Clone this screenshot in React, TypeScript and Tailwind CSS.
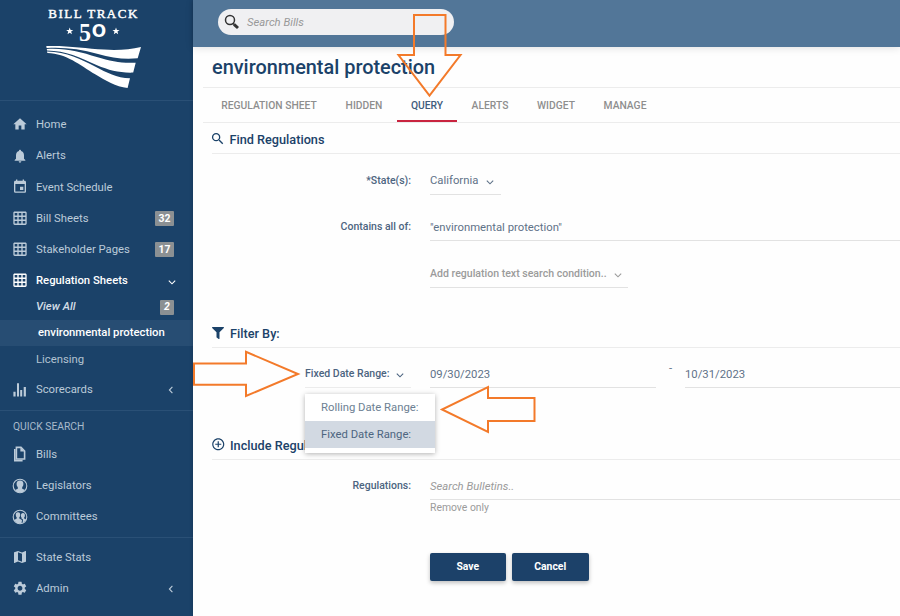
import type { ReactNode } from 'react'
import {
  MdHome,
  MdNotifications,
  MdEvent,
  MdGridOn,
  MdMap,
  MdSettings,
  MdSearch,
  MdAddCircleOutline,
} from 'react-icons/md'
import { FaFilter } from 'react-icons/fa'

type ChevronProps = {
  direction?: 'down' | 'left'
  className?: string
}

const Chevron = ({ direction = 'down', className = '' }: ChevronProps) => (
  <svg
    viewBox="0 0 8 8"
    fill="none"
    stroke="currentColor"
    strokeWidth="1.1"
    className={`h-2 w-2 shrink-0 ${className}`}
  >
    <path d={direction === 'down' ? 'M0.8 2.6 4 5.8 7.2 2.6' : 'M5.4 0.8 2.4 4 5.4 7.2'} />
  </svg>
)

const BarsIcon = () => (
  <svg viewBox="0 0 14 14" fill="currentColor" className="h-3.5 w-3.5">
    <path d="M0.4 8.7h2.2v4.900H0.400zM4 0.300h2v13.300H4zM7.200 7h2v6.600h-2zM10.700 4h2.200v9.600h-2.200z" />
  </svg>
)

const PagesIcon = () => (
  <svg
    viewBox="0 0 14 16"
    fill="none"
    stroke="currentColor"
    strokeWidth="1.6"
    className="h-4 w-3.5"
  >
    <path d="M3.400 1.400h4.600L11.600 5v8H3.400z" />
    <path d="M7.400 1.400v4.200h4.200z" fill="currentColor" stroke="none" />
    <path d="M1.800 3v11.600h7.800" />
  </svg>
)

const LegislatorIcon = () => (
  <svg viewBox="0 0 16 16" className="h-4 w-4">
    <circle cx="8" cy="8" r="6.8" fill="none" stroke="currentColor" strokeWidth="1.1" />
    <path
      fill="currentColor"
      d="M8 2.400c2.500 0 3.600 1.500 3.400 3.600 0 1.500-.6 2.500-1.200 3.100v1.700l2.900 1.200A6.600 6.600 0 0 1 8 14.600a6.600 6.600 0 0 1-5.100-2.600l2.900-1.200V9.100C5.200 8.500 4.600 7.500 4.600 6 4.400 3.900 5.500 2.400 8 2.400z"
    />
  </svg>
)

const CommitteeIcon = () => (
  <svg viewBox="0 0 16 16" className="h-4 w-4">
    <circle cx="8" cy="8" r="6.8" fill="none" stroke="currentColor" strokeWidth="1.1" />
    <path
      fill="currentColor"
      d="M6 3.200c1.700 0 2.300 1.200 2.200 2.700 0 1.200-.5 1.900-.9 2.400v1.200l2.700 1.600-.5 3.300a6.600 6.600 0 0 1-7.200-3.500l2.400-1.300V8.300c-.4-.5-.9-1.200-.9-2.400C3.700 4.400 4.300 3.200 6 3.200z"
    />
    <path
      fill="currentColor"
      d="M11 4.100c1.500 0 2 1 1.900 2.300 0 1-.4 1.600-.8 2v1l1.900.8a6.600 6.600 0 0 1-3.300 3.700l.3-3.400-1.500-1.100v-1c-.4-.4-.6-1-.6-2C8.900 5.100 9.500 4.100 11 4.100z"
    />
  </svg>
)

const Logo = () => (
  <div className="h-[101px] shrink-0 border-b border-[#2a5076] text-white">
    <svg viewBox="0 0 193 100" fill="currentColor" className="h-[100px] w-[193px]">
      <text
        x="48.300"
        y="17.600"
        fontSize="13"
        textLength="89"
        fontFamily="Liberation Serif, serif"
        stroke="currentColor"
        strokeWidth="0.45"
      >
        BILL TRACK
      </text>
      <text
        x="79"
        y="41.300"
        fontSize="25.500"
        fontWeight="bold"
        textLength="12"
        lengthAdjust="spacingAndGlyphs"
        fontFamily="Liberation Serif, serif"
      >
        5
      </text>
      <text x="91.800" y="36.800" fontSize="25" fontWeight="bold" fontFamily="Lato, sans-serif">
        o
      </text>
      <path d="M69.700 27.400l.9 2.500 2.700.1-2.100 1.600.7 2.600-2.200-1.500-2.200 1.500.7-2.600-2.100-1.600 2.700-.1z" />
      <path d="M116 27.400l.9 2.500 2.700.1-2.100 1.600.7 2.600-2.200-1.500-2.200 1.500.7-2.600-2.100-1.600 2.700-.1z" />
      <path d="M46.300 46C66 45.200 86 48.500 104 49.600c14 .8 26 0 37-2.600l-3.300 11.200c-12 1.300-26 0-39.700-4.200C80 49 64 46.900 46.600 48z" />
      <path d="M46.800 48.900c20-1 34 3.200 50 8.100 14 4.300 25.200 6.500 38.900 5.700L133.200 72.600c-14 .4-24-2.300-36.200-7.300C80 57.700 66 50.700 47 50.500z" />
      <path d="M47 51.400c20 .3 34 8 48 15 12 6.200 21.400 11.400 35 11.900L127.600 88c-12-1.400-22-7.600-32-13.500C79 64.500 67 53.700 47.400 52.900z" />
    </svg>
  </div>
)

const Badge = ({ children, className = '' }: { children: ReactNode; className?: string }) => (
  <span
    className={`ml-auto flex h-[15px] items-center justify-center rounded-[1px] bg-[#8b9093] text-[10.4px] font-bold text-white ${className}`}
  >
    {children}
  </span>
)

type NavItemProps = {
  icon: ReactNode
  label: string
  active?: boolean
  badge?: number
  chevron?: 'down' | 'left'
}

const NavItem = ({ icon, label, active, badge, chevron }: NavItemProps) => (
  <div
    className={`flex h-[31.2px] shrink-0 items-center pr-[19px] pl-[12px] ${
      active ? 'font-medium text-white' : 'text-[#bccbd9]'
    }`}
  >
    <span className="flex w-4 shrink-0 justify-center text-[16.5px]">{icon}</span>
    <span className="ml-2 pt-[2px] text-[11.3px] whitespace-nowrap">{label}</span>
    {badge && <Badge className="mt-px w-[19px]">{badge}</Badge>}
    {chevron && (
      <Chevron
        direction={chevron}
        className={chevron === 'left' ? 'mt-px mr-[-1px] ml-auto' : 'mt-[2px] mr-[-2px] ml-auto'}
      />
    )}
  </div>
)

const Sidebar = () => (
  <aside className="flex w-[193px] shrink-0 flex-col bg-[#1b4269]">
    <Logo />
    <nav className="flex flex-col pt-[8px]">
      <NavItem icon={<MdHome />} label="Home" />
      <NavItem icon={<MdNotifications className="text-[18px]" />} label="Alerts" />
      <NavItem icon={<MdEvent className="text-[17.5px]" />} label="Event Schedule" />
      <NavItem icon={<MdGridOn />} label="Bill Sheets" badge={32} />
      <NavItem icon={<MdGridOn />} label="Stakeholder Pages" badge={17} />
      <NavItem icon={<MdGridOn />} label="Regulation Sheets" active chevron="down" />
      <div className="-mt-[2px] flex h-[26px] items-center pr-[19px] pl-9 text-[11.3px] font-medium text-[#d3dde6] italic">
        View All
        <Badge className="w-3.5">2</Badge>
      </div>
      <div className="flex h-[26px] items-center bg-[#274d73] pl-[38px] text-[11.3px] font-medium text-white">
        environmental protection
      </div>
      <div className="mb-[2px] flex h-[26px] items-center pt-[2px] pl-9 text-[11.3px] text-[#b3c3d2]">
        Licensing
      </div>
      <NavItem icon={<BarsIcon />} label="Scorecards" chevron="left" />
    </nav>
    <div className="mt-[5px] flex h-[28.5px] items-center border-t border-[#2a5076] pt-[3px] pl-[13px] text-[10.3px] text-[#a9bacb]">
      QUICK SEARCH
    </div>
    <nav className="flex flex-col border-b border-[#2a5076] pb-[4.5px]">
      <NavItem icon={<PagesIcon />} label="Bills" />
      <NavItem icon={<LegislatorIcon />} label="Legislators" />
      <NavItem icon={<CommitteeIcon />} label="Committees" />
    </nav>
    <nav className="flex flex-col pt-[3.5px]">
      <NavItem icon={<MdMap className="text-[18px]" />} label="State Stats" />
      <NavItem icon={<MdSettings />} label="Admin" chevron="left" />
    </nav>
  </aside>
)

const TopBar = () => (
  <header className="flex h-[47px] shrink-0 bg-[#527698] pt-[9px] pl-[25px] shadow-[0_1px_8px_rgba(0,0,0,0.12)]">
    <div className="flex h-[26px] w-[236px] items-center rounded-full bg-[#f0f0f2] pl-[6px]">
      <svg viewBox="0 0 16 16" fill="none" stroke="#333" className="h-4 w-4">
        <circle cx="6" cy="6" r="4.500" strokeWidth="1.500" />
        <path d="M9 9.200 10.200 10.400" strokeWidth="1.500" />
        <path d="M10 10.300 14 14" strokeWidth="3" />
      </svg>
      <span className="ml-[7px] pt-[2px] text-[11.3px] text-[#999] italic">Search Bills</span>
    </div>
  </header>
)

const tabs = [
  { label: 'REGULATION SHEET', width: 'w-[124px]' },
  { label: 'HIDDEN', width: 'w-[66px]' },
  { label: 'QUERY', width: 'w-[60px]', active: true },
  { label: 'ALERTS', width: 'w-[66px]' },
  { label: 'WIDGET', width: 'w-[66px]' },
  { label: 'MANAGE', width: 'w-[72px]' },
]

const Tabs = () => (
  <div className="ml-[10px] flex h-[35px] shrink-0 border-b border-[#ececec] pl-[4px] text-[10.3px] font-medium">
    {tabs.map(({ label, width, active }) => (
      <div
        key={label}
        className={`flex h-[34px] shrink-0 items-center justify-center border-b-2 pt-[3px] whitespace-nowrap ${width} ${
          active ? 'border-[#c9243f] text-[#3f5c7c]' : 'border-transparent text-[#8e8e8e]'
        }`}
      >
        {label}
      </div>
    ))}
  </div>
)

type SectionProps = {
  icon: ReactNode
  title: string
  className?: string
}

const SectionTitle = ({ icon, title, className = '' }: SectionProps) => (
  <h2
    className={`ml-[19px] flex h-[31px] shrink-0 items-center border-b border-[#ececec] pt-px text-[12.7px] font-medium whitespace-nowrap text-[#1b4269] ${className}`}
  >
    <span className="flex shrink-0">{icon}</span>
    <span className="pt-[2px]">{title}</span>
  </h2>
)

type FieldProps = {
  label?: ReactNode
  children: ReactNode
  className?: string
}

const Field = ({ label, children, className = '' }: FieldProps) => (
  <div className={`flex h-[28px] shrink-0 pl-[19px] ${className}`}>
    <div className="mr-[19px] flex w-[199px] shrink-0 justify-end text-[10.5px] font-medium text-[#4c6480]">
      {label && <span className="flex h-[27px] items-center whitespace-nowrap">{label}</span>}
    </div>
    {children}
  </div>
)

const input =
  'flex h-[28px] shrink-0 items-center whitespace-nowrap border-b border-[#e2e2e2] text-[11.3px]'

const RangeSelect = () => (
  <div className="relative flex h-[28px] w-[106px] items-center border-b border-[#ececec] pt-[2px]">
    Fixed Date Range:
    <Chevron className="mt-[2px] ml-[6px]" />
    <div className="absolute top-[34px] left-0 z-10 w-[130px] bg-white pb-[5px] text-[11.3px] font-normal text-[#6d7f93] shadow-[0_1px_5px_rgba(0,0,0,0.3)]">
      <div className="flex h-[27px] items-center pt-[2px] pl-[16px]">Rolling Date Range:</div>
      <div className="flex h-[27px] items-center bg-[#d2d9e2] pt-[2px] pl-[16px] text-[#4d6580]">
        Fixed Date Range:
      </div>
    </div>
  </div>
)

const Button = ({ children }: { children: ReactNode }) => (
  <button className="h-[28px] w-[76.5px] rounded-[2px] bg-[#1c4169] pt-px text-[10.4px] font-bold text-white shadow-[0_2px_4px_rgba(0,0,0,0.25)]">
    {children}
  </button>
)

const Callouts = () => (
  <svg
    viewBox="0 0 900 616"
    fill="none"
    stroke="#f37a2a"
    strokeWidth="2"
    className="pointer-events-none absolute inset-0 z-20 h-[616px] w-[900px]"
  >
    <path d="M414 15h31.500v40h15L429.500 95.500 398.500 55H414z" />
    <path d="M194 363.500h52v-11.700L298 374l-52 22v-11.300h-52z" />
    <path d="M534.500 398H488v-11L442 409.500 488 432v-11h46.500z" />
  </svg>
)

export default function App() {
  return (
    <div className="relative flex h-[616px] w-[900px] overflow-hidden bg-white font-[Roboto,sans-serif]">
      <Sidebar />
      <main className="flex min-w-0 flex-1 flex-col bg-[#fefefe] shadow-[0_0_4px_rgba(0,0,0,0.2)]">
        <TopBar />
        <h1 className="ml-[10px] flex h-[41px] shrink-0 items-center border-b border-[#ececec] pt-px pl-[9px] text-[19.9px] font-medium text-[#1b4269]">
          environmental protection
        </h1>
        <Tabs />

        <SectionTitle
          icon={<MdSearch className="mr-[4px] -ml-[2px] text-[15.5px]" />}
          title="Find Regulations"
        />
        <Field label="*State(s):" className="mt-[13px]">
          <div className={`${input} w-[71px] pt-[2px] text-[#5f7288]`}>
            California
            <Chevron className="ml-[8px]" />
          </div>
        </Field>
        <Field label="Contains all of:" className="mt-[18px]">
          <div className={`${input} flex-1 pt-[3px] text-[#5f7288]`}>"environmental protection"</div>
        </Field>
        <Field className="mt-[19px]">
          <div className="flex h-[28px] w-[198px] shrink-0 items-center border-b border-[#e2e2e2] text-[10.55px] font-medium whitespace-nowrap text-[#9b9b9b]">
            Add regulation text search condition..
            <Chevron className="mt-[3px] ml-[7px]" />
          </div>
        </Field>

        <SectionTitle
          icon={<FaFilter className="mr-[6px] text-[12px]" />}
          title="Filter By:"
          className="mt-[29px]"
        />
        <Field label={<RangeSelect />} className="mt-[12px]">
          <div className={`${input} w-[226px] pt-[3px] text-[#5f7288]`}>09/30/2023</div>
          <span className="w-[29px] shrink-0 pl-[13px] text-[11.3px] leading-[18px] text-[#5f7288]">-</span>
          <div className={`${input} flex-1 pt-[3px] text-[#5f7288]`}>10/31/2023</div>
        </Field>

        <SectionTitle
          icon={<MdAddCircleOutline className="mr-[4.5px] -ml-px text-[14.5px]" />}
          title="Include Regulations:"
          className="mt-[41px]"
        />
        <Field label="Regulations:" className="mt-[12px]">
          <div className={`${input} flex-1 pt-[3px] text-[#9b9b9b] italic`}>Search Bulletins..</div>
        </Field>
        <div className="mt-px pl-[237px] text-[10.4px] leading-[14px] text-[#9b9b9b]">Remove only</div>

        <div className="mt-[37.5px] flex gap-[6px] pl-[236.5px]">
          <Button>Save</Button>
          <Button>Cancel</Button>
        </div>
      </main>
      <Callouts />
    </div>
  )
}
